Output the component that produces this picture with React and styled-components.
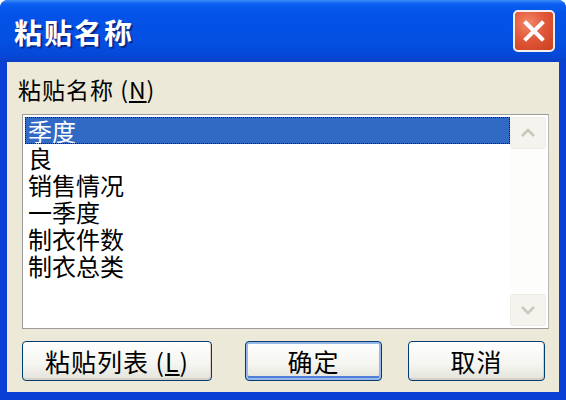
import React from "react";
import styled, { createGlobalStyle } from "styled-components";

const Global = createGlobalStyle`
  html, body {
    margin: 0;
    padding: 0;
    background: #ffffff;
  }
  body {
    font-family: "Noto Sans CJK SC", "Liberation Sans", sans-serif;
  }
`;

const items = ["季度", "良", "销售情况", "一季度", "制衣件数", "制衣总类"];

const Window = styled.div`
  width: 566px;
  height: 400px;
  display: flex;
  flex-direction: column;
  background: #0a3fd6;
  border-radius: 8px 8px 0 0;
  overflow: hidden;
  box-sizing: border-box;
`;

const TitleBar = styled.div`
  height: 62px;
  flex-shrink: 0;
  display: flex;
  align-items: center;
  justify-content: space-between;
  padding: 0 11px 0 14px;
  background: linear-gradient(
    to bottom,
    #3c8cf8 0px,
    #0a5ef0 4px,
    #0452e8 14px,
    #0450e3 40px,
    #0548d6 56px,
    #0a3fc4 62px
  );
`;

const Title = styled.div`
  color: #ffffff;
  font-size: 28px;
  font-weight: 700;
  letter-spacing: 2px;
  text-shadow: 2px 2px 0 #0b2a8a;
  padding-top: 2px;
`;

const CloseButton = styled.div`
  width: 42px;
  height: 42px;
  box-sizing: border-box;
  border: 2px solid #f4f0ee;
  border-radius: 5px;
  background: radial-gradient(circle at 35% 30%, #f08a6a 0%, #e2583a 45%, #c8401e 100%);
  display: flex;
  align-items: center;
  justify-content: center;
`;

const Body = styled.div`
  flex: 1;
  margin: 0 7px 8px 7px;
  background: #ece9d8;
  padding: 14px 10px 0 15px;
  display: flex;
  flex-direction: column;
`;

const Label = styled.div`
  font-size: 23px;
  line-height: 26px;
  color: #000000;
  margin-left: -4px;
  letter-spacing: 1px;
`;

const Key = styled.span`
  text-decoration: underline;
`;

const ListBox = styled.div`
  margin-top: 12px;
  width: 527px;
  height: 215px;
  box-sizing: border-box;
  border: 1px solid #9b9b9b;
  border-right-color: #b8b8b8;
  background: #ffffff;
  display: flex;
  padding: 2px 2px 2px 2px;
`;

const Rows = styled.div`
  flex: 1;
  display: flex;
  flex-direction: column;
`;

const Row = styled.div`
  height: 27px;
  line-height: 27px;
  font-size: 24px;
  padding-left: 3px;
  color: ${(p) => (p.$selected ? "#ffffff" : "#000000")};
  background: ${(p) => (p.$selected ? "#316ac5" : "transparent")};
  outline: ${(p) => (p.$selected ? "1px dotted #0a1a50" : "none")};
  outline-offset: -1px;
  box-sizing: border-box;
`;

const ScrollBar = styled.div`
  width: 36px;
  display: flex;
  flex-direction: column;
  justify-content: space-between;
  background: #fdfdfb;
`;

const ArrowButton = styled.div`
  height: 32px;
  box-sizing: border-box;
  border: 1px solid #eeede5;
  border-radius: 3px;
  background: #f4f3ee;
  display: flex;
  align-items: center;
  justify-content: center;
`;

const ButtonRow = styled.div`
  display: flex;
  margin-top: 12px;
`;

const Button = styled.div`
  width: ${(p) => p.$w}px;
  height: 40px;
  margin-left: ${(p) => p.$ml}px;
  box-sizing: border-box;
  border: 1px solid #003c74;
  border-radius: 4px;
  background: linear-gradient(to bottom, #ffffff 0%, #f4f4f0 60%, #e3e2da 100%);
  box-shadow: ${(p) =>
    p.$default
      ? "inset 0 0 0 2px #98b8ea, inset 0 -2px 0 2px #4f7fd8"
      : "inset -1px -2px 0 #d6d0c5"};
  display: flex;
  align-items: center;
  justify-content: center;
  font-size: 25px;
  color: #000000;
  letter-spacing: 1px;
`;

export default function App() {
  return (
    <>
      <Global />
      <Window>
        <TitleBar>
          <Title>粘贴名称</Title>
          <CloseButton>
            <svg width="24" height="24" viewBox="0 0 24 24">
              <path d="M4 4 L20 20 M20 4 L4 20" stroke="#ffffff" strokeWidth="4" strokeLinecap="square" />
            </svg>
          </CloseButton>
        </TitleBar>
        <Body>
          <Label>
            粘贴名称 (<Key>N</Key>)
          </Label>
          <ListBox>
            <Rows>
              {items.map((t, i) => (
                <Row key={i} $selected={i === 0}>
                  {t}
                </Row>
              ))}
            </Rows>
            <ScrollBar>
              <ArrowButton>
                <svg width="16" height="10" viewBox="0 0 16 10">
                  <path d="M2 8 L8 2 L14 8" fill="none" stroke="#c9c7ba" strokeWidth="2.5" />
                </svg>
              </ArrowButton>
              <ArrowButton>
                <svg width="16" height="10" viewBox="0 0 16 10">
                  <path d="M2 2 L8 8 L14 2" fill="none" stroke="#c9c7ba" strokeWidth="2.5" />
                </svg>
              </ArrowButton>
            </ScrollBar>
          </ListBox>
          <ButtonRow>
            <Button $w={190} $ml={0}>
              粘贴列表 (<Key>L</Key>)
            </Button>
            <Button $w={137} $ml={33} $default>
              确定
            </Button>
            <Button $w={137} $ml={26}>
              取消
            </Button>
          </ButtonRow>
        </Body>
      </Window>
    </>
  );
}
